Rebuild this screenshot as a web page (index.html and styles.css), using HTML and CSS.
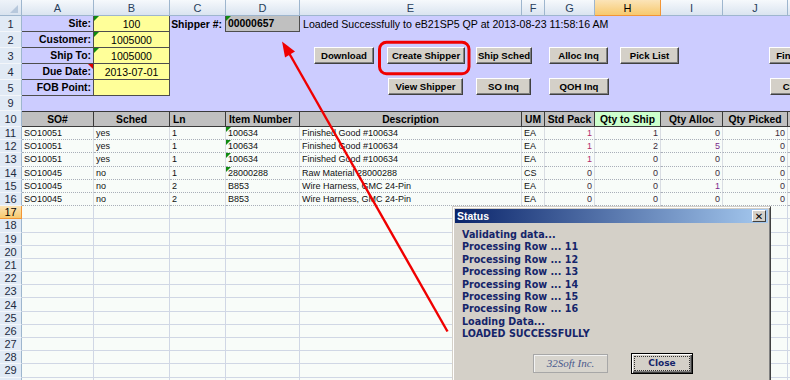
FILE: index.html
```html
<!DOCTYPE html>
<html lang="en">
<head>
    <meta charset="UTF-8">
    <title>Shipper Workbook</title>
    <link rel="stylesheet" href="styles.css">
</head>
<body>

    <div class="sheet">
        <!-- column headers -->
        <div class="corner"></div>
        <div class="ch">A</div><div class="ch">B</div><div class="ch">C</div><div class="ch">D</div>
        <div class="ch">E</div><div class="ch">F</div><div class="ch">G</div><div class="ch sel">H</div>
        <div class="ch">I</div><div class="ch">J</div><div class="ch"></div>

        <!-- header block -->
        <div class="rh">1</div>
        <div class="lbl">Site:</div>
        <div class="inp flag">100</div>
        <div class="cap">Shipper #:</div>
        <div class="ship flag">00000657</div>
        <div class="msg">Loaded Successfully to eB21SP5 QP at 2013-08-23 11:58:16 AM</div>

        <div class="rh">2</div>
        <div class="lbl">Customer:</div>
        <div class="inp flag">1005000</div>
        <div class="filler"></div>
        <div class="tools">
            <button class="xb w60">Download</button>
            <button class="xb w78">Create Shipper</button>
            <button class="xb w56">Ship Sched</button>
            <button class="xb w59">Alloc Inq</button>
            <button class="xb w59">Pick List</button>
            <button class="xb w73">Find Shipper</button>

            <span></span>
            <button class="xb w75 nudge">View Shipper</button>
            <button class="xb w55">SO Inq</button>
            <button class="xb w60">QOH Inq</button>
            <span></span>
            <button class="xb w73 nudge">Clear Data</button>
        </div>

        <div class="rh">3</div>
        <div class="lbl">Ship To:</div>
        <div class="inp flag">1005000</div>

        <div class="rh">4</div>
        <div class="lbl note">Due Date:</div>
        <div class="inp">2013-07-01</div>

        <div class="rh">5</div>
        <div class="lbl">FOB Point:</div>
        <div class="inp"></div>

        <div class="rh">9</div>
        <div class="lav wide"></div>

        <!-- column titles -->
        <div class="rh">10</div>
        <div class="hd">SO#</div>
        <div class="hd">Sched</div>
        <div class="hd l">Ln</div>
        <div class="hd l">Item Number</div>
        <div class="hd">Description</div>
        <div class="hd">UM</div>
        <div class="hd">Std Pack</div>
        <div class="hd go">Qty to Ship</div>
        <div class="hd">Qty Alloc</div>
        <div class="hd">Qty Picked</div>
        <div class="hd"></div>

        <!-- lines -->
        <div class="rh">11</div>
        <div class="d">SO10051</div><div class="d">yes</div><div class="d">1</div><div class="d flag">100634</div>
        <div class="d">Finished Good #100634</div><div class="d">EA</div>
        <div class="d n hi">1</div><div class="d n">1</div><div class="d n">0</div><div class="d n">10</div><div class="d"></div>

        <div class="rh">12</div>
        <div class="d">SO10051</div><div class="d">yes</div><div class="d">1</div><div class="d flag">100634</div>
        <div class="d">Finished Good #100634</div><div class="d">EA</div>
        <div class="d n hi">1</div><div class="d n">2</div><div class="d n pu">5</div><div class="d n">0</div><div class="d"></div>

        <div class="rh">13</div>
        <div class="d">SO10051</div><div class="d">yes</div><div class="d">1</div><div class="d flag">100634</div>
        <div class="d">Finished Good #100634</div><div class="d">EA</div>
        <div class="d n hi">1</div><div class="d n">0</div><div class="d n">0</div><div class="d n">0</div><div class="d"></div>

        <div class="rh">14</div>
        <div class="d">SO10045</div><div class="d">no</div><div class="d">1</div><div class="d flag">28000288</div>
        <div class="d">Raw Material 28000288</div><div class="d">CS</div>
        <div class="d n">0</div><div class="d n">0</div><div class="d n">0</div><div class="d n">0</div><div class="d"></div>

        <div class="rh">15</div>
        <div class="d">SO10045</div><div class="d">no</div><div class="d">2</div><div class="d">B853</div>
        <div class="d">Wire Harness, GMC 24-Pin</div><div class="d">EA</div>
        <div class="d n">0</div><div class="d n">0</div><div class="d n pu">1</div><div class="d n">0</div><div class="d"></div>

        <div class="rh">16</div>
        <div class="d">SO10045</div><div class="d">no</div><div class="d">2</div><div class="d">B853</div>
        <div class="d">Wire Harness, GMC 24-Pin</div><div class="d">EA</div>
        <div class="d n">0</div><div class="d n">0</div><div class="d n">0</div><div class="d n">0</div><div class="d"></div>

        <!-- empty rows -->
        <div class="rh sel">17</div><div class="e"></div><div class="e"></div><div class="e"></div><div class="e"></div><div class="e"></div><div class="e"></div><div class="e"></div><div class="e"></div><div class="e"></div><div class="e"></div><div class="e"></div>
        <div class="rh">18</div><div class="e"></div><div class="e"></div><div class="e"></div><div class="e"></div><div class="e"></div><div class="e"></div><div class="e"></div><div class="e"></div><div class="e"></div><div class="e"></div><div class="e"></div>
        <div class="rh">19</div><div class="e"></div><div class="e"></div><div class="e"></div><div class="e"></div><div class="e"></div><div class="e"></div><div class="e"></div><div class="e"></div><div class="e"></div><div class="e"></div><div class="e"></div>
        <div class="rh">20</div><div class="e"></div><div class="e"></div><div class="e"></div><div class="e"></div><div class="e"></div><div class="e"></div><div class="e"></div><div class="e"></div><div class="e"></div><div class="e"></div><div class="e"></div>
        <div class="rh">21</div><div class="e"></div><div class="e"></div><div class="e"></div><div class="e"></div><div class="e"></div><div class="e"></div><div class="e"></div><div class="e"></div><div class="e"></div><div class="e"></div><div class="e"></div>
        <div class="rh">22</div><div class="e"></div><div class="e"></div><div class="e"></div><div class="e"></div><div class="e"></div><div class="e"></div><div class="e"></div><div class="e"></div><div class="e"></div><div class="e"></div><div class="e"></div>
        <div class="rh">23</div><div class="e"></div><div class="e"></div><div class="e"></div><div class="e"></div><div class="e"></div><div class="e"></div><div class="e"></div><div class="e"></div><div class="e"></div><div class="e"></div><div class="e"></div>
        <div class="rh">24</div><div class="e"></div><div class="e"></div><div class="e"></div><div class="e"></div><div class="e"></div><div class="e"></div><div class="e"></div><div class="e"></div><div class="e"></div><div class="e"></div><div class="e"></div>
        <div class="rh">25</div><div class="e"></div><div class="e"></div><div class="e"></div><div class="e"></div><div class="e"></div><div class="e"></div><div class="e"></div><div class="e"></div><div class="e"></div><div class="e"></div><div class="e"></div>
        <div class="rh">26</div><div class="e"></div><div class="e"></div><div class="e"></div><div class="e"></div><div class="e"></div><div class="e"></div><div class="e"></div><div class="e"></div><div class="e"></div><div class="e"></div><div class="e"></div>
        <div class="rh">27</div><div class="e"></div><div class="e"></div><div class="e"></div><div class="e"></div><div class="e"></div><div class="e"></div><div class="e"></div><div class="e"></div><div class="e"></div><div class="e"></div><div class="e"></div>
        <div class="rh">28</div><div class="e"></div><div class="e"></div><div class="e"></div><div class="e"></div><div class="e"></div><div class="e"></div><div class="e"></div><div class="e"></div><div class="e"></div><div class="e"></div><div class="e"></div>
        <div class="rh">29</div><div class="e"></div><div class="e"></div><div class="e"></div><div class="e"></div><div class="e"></div><div class="e"></div><div class="e"></div><div class="e"></div><div class="e"></div><div class="e"></div><div class="e"></div>
        <div class="rh"></div><div class="e"></div><div class="e"></div><div class="e"></div><div class="e"></div><div class="e"></div><div class="e"></div><div class="e"></div><div class="e"></div><div class="e"></div><div class="e"></div><div class="e"></div>
    </div>

    <!-- annotation -->
    <svg class="marks" width="790" height="380" viewBox="0 0 790 380">
        <rect x="379.5" y="42.2" width="89.5" height="31.6" rx="7" fill="none" stroke="#f00000" stroke-width="3"/>
        <line x1="447.5" y1="331.5" x2="289" y2="53" stroke="#f00000" stroke-width="2.4"/>
        <polygon points="282,41.5 285,57.5 295,51.5" fill="#f00000"/>
    </svg>

    <!-- status window -->
    <div class="dlg">
        <div class="dlg-title">
            <span>Status</span>
            <button class="dlg-x">&#x2715;</button>
        </div>
        <div class="log">
            Validating data...<br>
            Processing Row ... 11<br>
            Processing Row ... 12<br>
            Processing Row ... 13<br>
            Processing Row ... 14<br>
            Processing Row ... 15<br>
            Processing Row ... 16<br>
            Loading Data...<br>
            LOADED SUCCESSFULLY
        </div>
        <div class="dlg-foot">
            <span class="brand">32Soft Inc.</span>
            <button class="close">Close</button>
        </div>
    </div>

</body>
</html>
```

FILE: styles.css
```css
* {
    box-sizing: border-box;
}

body {
    margin: 0;
    width: 790px;
    height: 380px;
    overflow: hidden;
    position: relative;
    background: #fff;
    font-family: "Liberation Sans", Arial, sans-serif;
    color: #000;
}

.sheet {
    display: grid;
    grid-template-columns: 22px 72px 76px 56px 74px 222px 23px 50px 66px 62px 65px 30px;
    grid-template-rows: 16px repeat(5, 16px) 15px 16px repeat(20, 13.2px);
    width: 818px;
}

.sheet > div {
    display: flex;
    align-items: center;
    white-space: nowrap;
    overflow: hidden;
}

/* Headers */
.corner {
    background: linear-gradient(#eef3f9, #d9e3ef);
    border-right: 1px solid #9eb6ce;
    border-bottom: 1px solid #9eb6ce;
    position: relative;
}

.corner::after {
    content: "";
    position: absolute;
    right: 3px;
    bottom: 2px;
    border-left: 8px solid transparent;
    border-bottom: 8px solid #b7c8dc;
}

.ch {
    justify-content: center;
    background: linear-gradient(#f6f9fc, #dae4f0);
    border-right: 1px solid #9eb6ce;
    border-bottom: 1px solid #9eb6ce;
    font-size: 11px;
    color: #283e5c;
}

.rh {
    justify-content: center;
    background: #e1eaf5;
    border-right: 1px solid #9eb6ce;
    border-bottom: 1px solid #f3f6fa;
    font-size: 11px;
    color: #1d2b40;
}

.ch.sel,
.rh.sel {
    background: linear-gradient(#fbe4b8, #f7c96e);
    border-color: #f29536;
    color: #000;
}

/* Top block */
.lav,
.filler,
.cap,
.msg {
    background: #ccccff;
}

.wide {
    grid-column: span 2;
}

.filler {
    grid-column: 4 / 6;
    grid-row: 3 / 8;
}

.lbl {
    justify-content: flex-end;
    padding-right: 2px;
    background: #ccccff;
    border-right: 1px solid #4d4d4d;
    border-bottom: 1px solid #4d4d4d;
    font-size: 10.4px;
    font-weight: bold;
}

.inp {
    justify-content: center;
    background: #ffff99;
    border-right: 1px solid #4d4d4d;
    border-bottom: 1px solid #4d4d4d;
    font-size: 10.5px;
}

.cap {
    justify-content: flex-end;
    padding-right: 3px;
    border-right: 1px solid #4d4d4d;
    font-size: 10.4px;
    font-weight: bold;
}

.ship {
    padding-left: 2px;
    background: #c0c0c0;
    border-right: 1px solid #4d4d4d;
    border-bottom: 1px solid #4d4d4d;
    font-size: 10.4px;
    font-weight: bold;
}

.msg {
    grid-column: 6 / 13;
    padding-left: 3px;
    font-size: 10.6px;
}

.flag,
.note {
    position: relative;
}

.flag::before {
    content: "";
    position: absolute;
    left: 0;
    top: 0;
    border-top: 5px solid #108a10;
    border-right: 5px solid transparent;
}

.note::after {
    content: "";
    position: absolute;
    right: 0;
    top: 0;
    border-top: 5px solid #e00000;
    border-left: 5px solid transparent;
}

/* Sheet buttons */
.tools {
    grid-column: 6 / 13;
    grid-row: 3 / 8;
    background: #ccccff;
    display: grid !important;
    grid-template-columns: 73px 89px 73px 71px 149px 80px;
    grid-template-rows: 17px 17px;
    row-gap: 14px;
    align-content: start;
    padding: 15px 0 0 14px;
}

.xb {
    height: 17px;
    padding: 0;
    background: #d4d0c8;
    border: 1px solid;
    border-color: #fff #404040 #404040 #fff;
    box-shadow: inset -1px -1px #808080;
    font: bold 9.6px "Liberation Sans", Arial, sans-serif;
    color: #000;
    white-space: nowrap;
    overflow: hidden;
}

.w55 { width: 55px; }
.w56 { width: 56px; }
.w59 { width: 59px; }
.w60 { width: 60px; }
.w73 { width: 73px; }
.w75 { width: 75px; }
.w78 { width: 78px; }

.nudge {
    margin-left: 1px;
}

/* Table */
.hd {
    justify-content: center;
    background: #c0c0c0;
    border-top: 1px solid #3a3a3a;
    border-right: 1px solid #3a3a3a;
    border-bottom: 1px solid #3a3a3a;
    font-size: 10.3px;
    font-weight: bold;
}

.hd.l {
    justify-content: flex-start;
    padding-left: 3px;
}

.hd.go {
    background: #ccffcc;
}

.d {
    padding: 0 2px;
    background: #f8fcf9;
    border-right: 1px solid #d9dde3;
    border-bottom: 1px dotted #a9afb9;
    font-size: 9px;
    color: #111;
}

.d.n {
    justify-content: flex-end;
    color: #3b2b3b;
}

.d.hi {
    color: #b02c6c;
}

.d.pu {
    color: #7a2a8c;
}

.e {
    background: #f8fcf9;
    border-right: 1px solid #d0d7e5;
    border-bottom: 1px solid #d0d7e5;
}

/* Annotation */
.marks {
    position: absolute;
    left: 0;
    top: 0;
    pointer-events: none;
}

/* Status window */
.dlg {
    position: absolute;
    left: 452px;
    top: 206px;
    width: 319px;
    height: 184px;
    padding: 2px;
    background: #d4d0c8;
    border: 1px solid;
    border-color: #d4d0c8 #404040 #404040 #d4d0c8;
    box-shadow: inset 1px 1px #fff, inset -1px -1px #808080;
}

.dlg-title {
    height: 14px;
    display: flex;
    align-items: center;
    justify-content: space-between;
    padding: 0 2px;
    background: linear-gradient(90deg, #0a246a, #a6caf0);
}

.dlg-title span {
    color: #fff;
    font: bold 10.5px "Liberation Sans", Arial, sans-serif;
}

.dlg-x {
    width: 14px;
    height: 12px;
    padding: 0;
    background: #d4d0c8;
    border: 1px solid;
    border-color: #fff #404040 #404040 #fff;
    font: bold 10px/9px "DejaVu Sans", sans-serif;
    color: #000;
}

.log {
    padding: 6px 0 0 7px;
    color: #15256a;
    font: bold 9.6px/12.4px "DejaVu Sans", Tahoma, sans-serif;
}

.dlg-foot {
    display: flex;
    align-items: center;
    gap: 23px;
    margin-top: 12px;
    padding-left: 78px;
}

.brand {
    width: 75px;
    height: 19px;
    display: flex;
    align-items: center;
    justify-content: center;
    background: #d8d5ce;
    border: 1px solid #a7a7a7;
    box-shadow: inset 1px 1px #f2f2f2;
    font: italic 11px "Liberation Serif", serif;
    color: #4a5a8c;
}

.close {
    width: 62px;
    height: 21px;
    padding: 0;
    background: #d4d0c8;
    border: 1px solid #000;
    box-shadow: inset 1px 1px #fff, inset -1px -1px #404040, inset -2px -2px #808080;
    outline: 1px dotted #333;
    outline-offset: -4px;
    font: bold 9px "DejaVu Sans", sans-serif;
    color: #15256a;
}
```
